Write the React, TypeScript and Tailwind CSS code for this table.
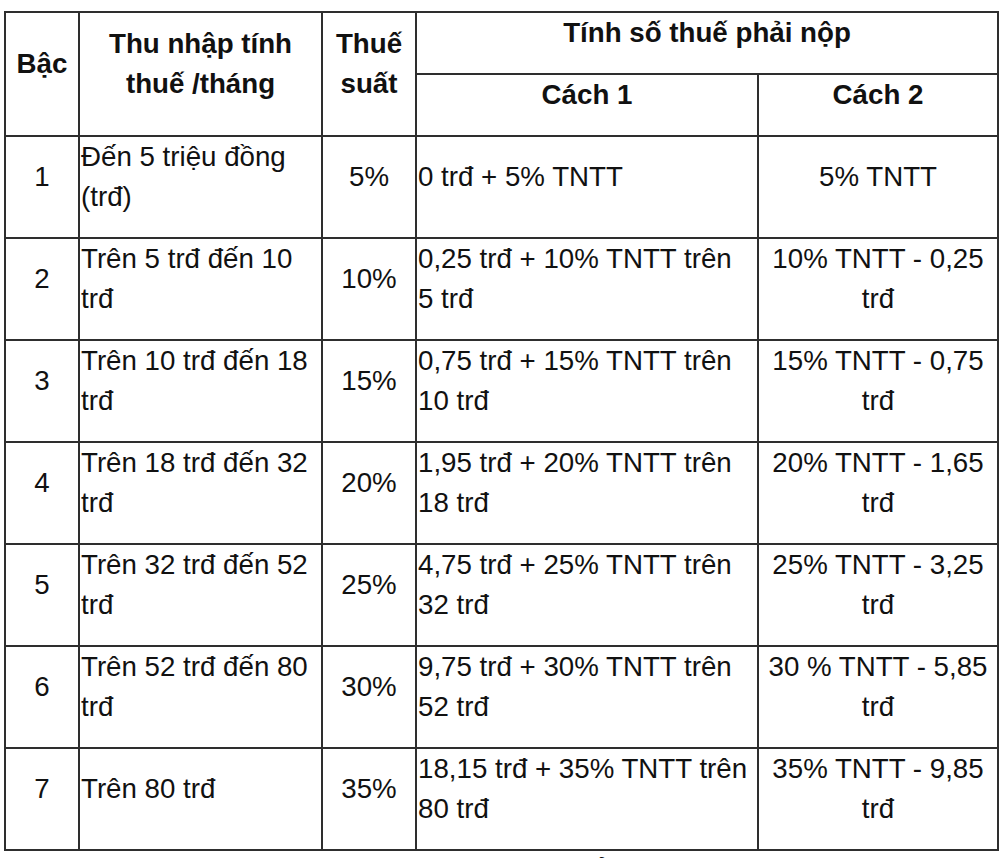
import React from "react";

type Row = {
    bac: string;
    thuNhap: string;
    thueSuat: string;
    cach1: string;
    cach2: string;
};

const rows: Row[] = [
    { bac: "1", thuNhap: "Đến 5 triệu đồng (trđ)", thueSuat: "5%", cach1: "0 trđ + 5% TNTT", cach2: "5% TNTT" },
    { bac: "2", thuNhap: "Trên 5 trđ đến 10 trđ", thueSuat: "10%", cach1: "0,25 trđ + 10% TNTT trên 5 trđ", cach2: "10% TNTT - 0,25 trđ" },
    { bac: "3", thuNhap: "Trên 10 trđ đến 18 trđ", thueSuat: "15%", cach1: "0,75 trđ + 15% TNTT trên 10 trđ", cach2: "15% TNTT - 0,75 trđ" },
    { bac: "4", thuNhap: "Trên 18 trđ đến 32 trđ", thueSuat: "20%", cach1: "1,95 trđ + 20% TNTT trên 18 trđ", cach2: "20% TNTT - 1,65 trđ" },
    { bac: "5", thuNhap: "Trên 32 trđ đến 52 trđ", thueSuat: "25%", cach1: "4,75 trđ + 25% TNTT trên 32 trđ", cach2: "25% TNTT - 3,25 trđ" },
    { bac: "6", thuNhap: "Trên 52 trđ đến 80 trđ", thueSuat: "30%", cach1: "9,75 trđ + 30% TNTT trên 52 trđ", cach2: "30 % TNTT - 5,85 trđ" },
    { bac: "7", thuNhap: "Trên 80 trđ", thueSuat: "35%", cach1: "18,15 trđ + 35% TNTT trên 80 trđ", cach2: "35% TNTT - 9,85 trđ" },
];

// each cell holds a paragraph with a bottom margin, like the source article
function Cell({ children, center = false, bold = false }: { children: React.ReactNode; center?: boolean; bold?: boolean }) {
    return (
        <p className={`mb-[20px] leading-[40px] ${center ? "text-center" : "text-left"} ${bold ? "font-bold" : "font-normal"}`}>
            {children}
        </p>
    );
}

const td = "border-2 border-[#2e2e2e] px-[2px] py-0 align-middle";
const tdLeft = "border-2 border-[#2e2e2e] pl-[1px] pr-[4px] py-0 align-middle";

export default function App() {
    return (
        <div className="min-h-[858px] overflow-hidden bg-white text-[#111] text-[27.7px]" style={{ fontFamily: '"Liberation Sans", Arial, sans-serif' }}>
            <div className="pt-[11px] pl-[4px]">
                <table className="table-fixed border-collapse w-[995px]">
                    <colgroup>
                        <col className="w-[74px]" />
                        <col className="w-[243px]" />
                        <col className="w-[94px]" />
                        <col className="w-[342px]" />
                        <col className="w-[240px]" />
                    </colgroup>
                    <thead>
                        <tr className="h-[62px]">
                            <td rowSpan={2} className={td}>
                                <Cell center bold>Bậc</Cell>
                            </td>
                            <td rowSpan={2} className={td}>
                                <Cell center bold>Thu nhập tính thuế /tháng</Cell>
                            </td>
                            <td rowSpan={2} className={td}>
                                <Cell center bold>Thuế suất</Cell>
                            </td>
                            <td colSpan={2} className={td}>
                                <Cell center bold>Tính số thuế phải nộp</Cell>
                            </td>
                        </tr>
                        <tr className="h-[61px]">
                            <td className={td}>
                                <Cell center bold>Cách 1</Cell>
                            </td>
                            <td className={td}>
                                <Cell center bold>Cách 2</Cell>
                            </td>
                        </tr>
                    </thead>
                    <tbody>
                        {rows.map((r) => (
                            <tr key={r.bac} className="h-[102px]">
                                <td className={td}>
                                    <Cell center>{r.bac}</Cell>
                                </td>
                                <td className={tdLeft}>
                                    <Cell>{r.thuNhap}</Cell>
                                </td>
                                <td className={td}>
                                    <Cell center>{r.thueSuat}</Cell>
                                </td>
                                <td className={tdLeft}>
                                    <Cell>{r.cach1}</Cell>
                                </td>
                                <td className={td}>
                                    <Cell center>{r.cach2}</Cell>
                                </td>
                            </tr>
                        ))}
                    </tbody>
                </table>
                {/* caption below the table, only its top edge is on screen */}
                <p className="pl-[520px] leading-[40px]">Có thể thấy thu càng nhiều.</p>
            </div>
        </div>
    );
}
